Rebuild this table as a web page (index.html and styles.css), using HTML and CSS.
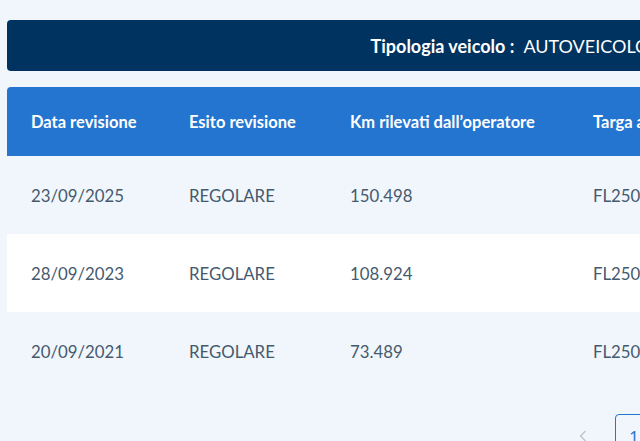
FILE: index.html
```html
<!DOCTYPE html>
<html lang="it">
<head>
<meta charset="utf-8">
<title>Revisioni</title>
<link rel="stylesheet" href="styles.css">
</head>
<body>
<div class="page">
  <div class="vehicle-bar">
    <span class="label">Tipologia veicolo :</span>
    <span class="value">AUTOVEICOLO</span>
  </div>
  <div class="table">
    <div class="row head">
      <div class="cell">Data revisione</div>
      <div class="cell">Esito revisione</div>
      <div class="cell">Km rilevati dall’operatore</div>
      <div class="cell">Targa associata</div>
    </div>
    <div class="row">
      <div class="cell">23/09/2025</div>
      <div class="cell">REGOLARE</div>
      <div class="cell">150.498</div>
      <div class="cell">FL250XX</div>
    </div>
    <div class="row alt">
      <div class="cell">28/09/2023</div>
      <div class="cell">REGOLARE</div>
      <div class="cell">108.924</div>
      <div class="cell">FL250XX</div>
    </div>
    <div class="row">
      <div class="cell">20/09/2021</div>
      <div class="cell">REGOLARE</div>
      <div class="cell">73.489</div>
      <div class="cell">FL250XX</div>
    </div>
  </div>
  <nav class="pager">
    <span class="prev"><svg width="8" height="12" viewBox="0 0 8 12"><path d="M6.5 1 L1.5 6 L6.5 11" fill="none" stroke="#b8c2cc" stroke-width="1.2"/></svg></span>
    <span class="pg active">1</span>
  </nav>
</div>
</body>
</html>
```
FILE: styles.css
```css
html, body {
  margin: 0;
  padding: 0;
  background: #f0f6fb;
  overflow: hidden;
}
body {
  font-family: "Lato", "Open Sans", sans-serif;
  color: #455a6e;
}
.page {
  width: 1006px;
  padding: 20px 0 0 7px;
}
.vehicle-bar {
  height: 51px;
  background: #00335f;
  border-radius: 4px;
  display: flex;
  align-items: center;
  justify-content: center;
  gap: 9px;
  color: #fff;
  font-size: 18px;
}
.vehicle-bar .label {
  font-weight: 700;
}
.table {
  margin-top: 16px;
}
.row {
  display: grid;
  grid-template-columns: 158px 161px 243px 1fr;
  height: 78px;
  align-items: center;
  font-size: 16.8px;
}
.row.alt {
  background: #ffffff;
}
.row.head {
  height: 69px;
  background: #2375d0;
  color: #fff;
  font-weight: 700;
  font-size: 16.5px;
  border-radius: 4px 4px 0 0;
}
.cell {
  padding-left: 24px;
  white-space: nowrap;
}
.pager {
  display: flex;
  align-items: flex-start;
  margin-top: 24px;
  padding-left: 572px;
}
.prev {
  display: flex;
  width: 36px;
  padding-top: 16px;
}
.pg {
  width: 36px;
  height: 40px;
  border: 1px solid #2375d0;
  border-radius: 4px;
  display: flex;
  align-items: center;
  justify-content: center;
  color: #2375d0;
  font-size: 16px;
}
```
